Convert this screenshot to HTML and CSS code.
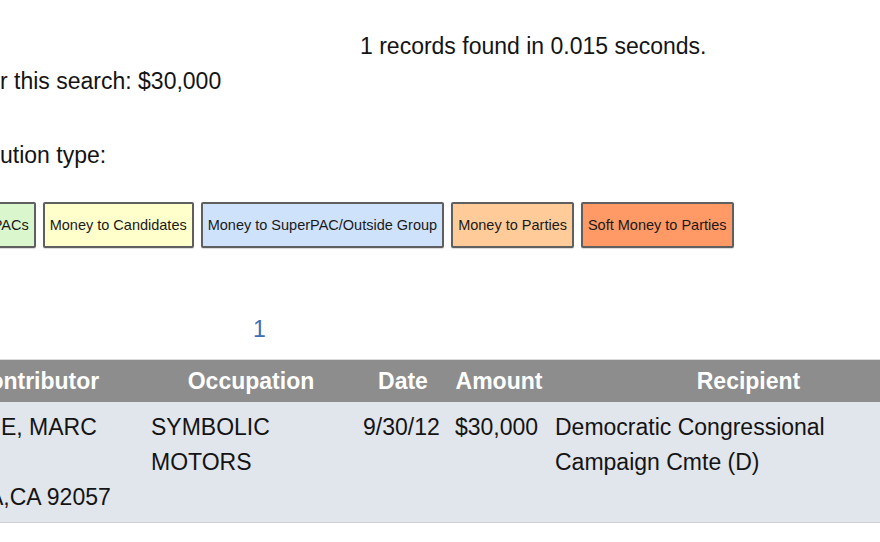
FILE: index.html
```html
<!DOCTYPE html>
<html>
<head>
<meta charset="utf-8">
<link rel="stylesheet" href="styles.css">
</head>
<body>
<div class="page">
  <p class="stats">1 records found in 0.015 seconds.</p>
  <p class="total">r this search: $30,000</p>
  <p class="legend-label">ution type:</p>
  <div class="legend">
    <span class="chip chip-pac">Money to PACs</span>
    <span class="chip chip-cand">Money to Candidates</span>
    <span class="chip chip-super">Money to SuperPAC/Outside Group</span>
    <span class="chip chip-party">Money to Parties</span>
    <span class="chip chip-soft">Soft Money to Parties</span>
  </div>
  <div class="pager"><a class="page-link">1</a></div>
  <table class="results">
    <colgroup>
      <col class="c-contrib">
      <col class="c-occ">
      <col class="c-date">
      <col class="c-amt">
      <col class="c-recip">
    </colgroup>
    <thead>
      <tr>
        <th>Contributor</th>
        <th>Occupation</th>
        <th>Date</th>
        <th>Amount</th>
        <th>Recipient</th>
      </tr>
    </thead>
    <tbody>
      <tr>
        <td class="contrib">
          <div>E, MARC</div>
          <div>&nbsp;</div>
          <div class="city">A,CA 92057</div>
        </td>
        <td>SYMBOLIC MOTORS</td>
        <td>9/30/12</td>
        <td>$30,000</td>
        <td>Democratic Congressional<br>Campaign Cmte (D)</td>
      </tr>
    </tbody>
  </table>
</div>
</body>
</html>
```
FILE: styles.css
```css
html, body {
  margin: 0;
  padding: 0;
  background: #ffffff;
  overflow: hidden;
}

.page {
  width: 880px;
  height: 542px;
  overflow: hidden;
  font-family: "Liberation Sans", Arial, Helvetica, sans-serif;
  font-size: 23px;
  line-height: 35px;
  color: #141414;
}

p {
  margin: 0;
}

.stats {
  margin-top: 29px;
  padding-left: 360px;
}

.total {
  margin-top: 0;
}

.legend-label {
  margin-top: 39px;
}

.legend {
  display: flex;
  gap: 7px;
  margin-top: 29px;
  margin-left: -78px;
}

.chip {
  flex: none;
  font-size: 14.5px;
  line-height: 18px;
  padding: 12px 5px;
  border: 2px solid #5f5f5f;
  border-radius: 2px;
  color: #1a1a1a;
  white-space: nowrap;
  box-shadow: 0 1px 1px rgba(0,0,0,0.15);
}

.chip-pac { background: #d9f6cc; }
.chip-cand { background: #ffffcc; }
.chip-super { background: #cfe2fc; }
.chip-party { background: #ffcc99; }
.chip-soft { background: #ff9966; }

.pager {
  margin-top: 64px;
  padding-left: 253px;
}

.page-link {
  color: #3f6db1;
}

.results {
  margin-top: 12px;
  margin-left: -73px;
  width: 1021px;
  table-layout: fixed;
  border-collapse: collapse;
  border-top: 1px solid #dcdcdc;
}

.c-contrib { width: 218px; }
.c-occ { width: 212px; }
.c-date { width: 92px; }
.c-amt { width: 100px; }
.c-recip { width: 399px; }

.results th {
  background: #8d8d8d;
  color: #ffffff;
  font-weight: bold;
  text-align: center;
  padding: 4px 0 3px 0;
}

.results td {
  background: #e1e5ec;
  vertical-align: top;
  text-align: left;
  padding: 8px 6px 7px 6px;
  border-bottom: 1px solid #cfcfcf;
}

.results td.contrib {
  padding-left: 74px;
}

.results td.contrib .city {
  margin-left: -13px;
}
```
